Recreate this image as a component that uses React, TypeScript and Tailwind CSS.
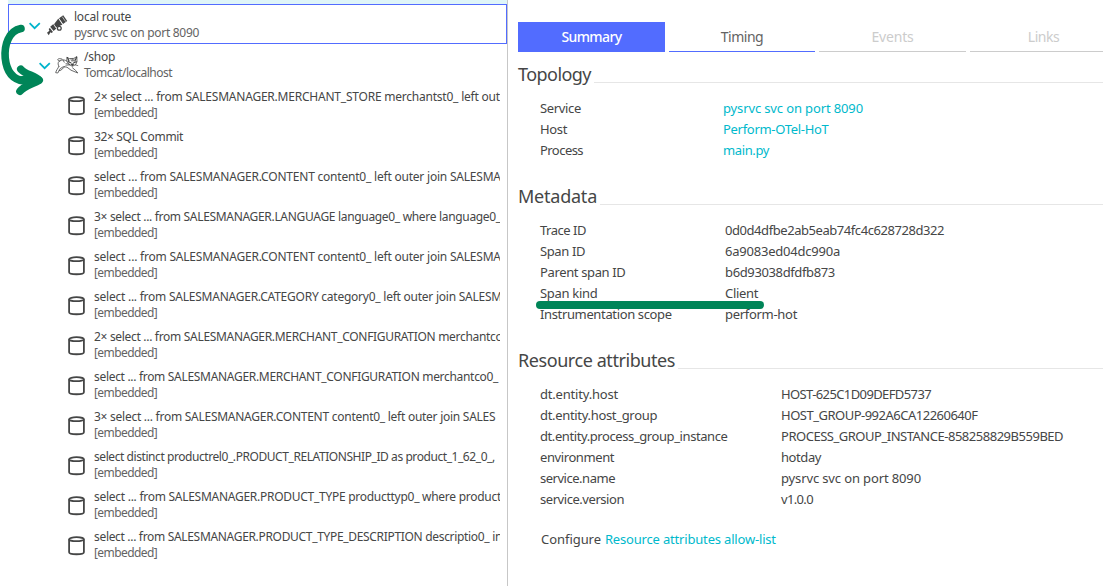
import React from "react";

type Statement = { text: string; tracking: string };
type Attribute = { name: string; nameTracking: string; value: string; valueTracking: string };

const statements: Statement[] = [
  { text: "2× select ... from SALESMANAGER.MERCHANT_STORE merchantst0_ left out", tracking: "tracking-[-0.22px]" },
  { text: "32× SQL Commit", tracking: "tracking-[-0.34px]" },
  { text: "select ... from SALESMANAGER.CONTENT content0_ left outer join SALESMA", tracking: "tracking-[-0.21px]" },
  { text: "3× select ... from SALESMANAGER.LANGUAGE language0_ where language0_", tracking: "tracking-[-0.32px]" },
  { text: "select ... from SALESMANAGER.CONTENT content0_ left outer join SALESMA", tracking: "tracking-[-0.21px]" },
  { text: "select ... from SALESMANAGER.CATEGORY category0_ left outer join SALESM", tracking: "tracking-[-0.24px]" },
  { text: "2× select ... from SALESMANAGER.MERCHANT_CONFIGURATION merchantco", tracking: "tracking-[-0.31px]" },
  { text: "select ... from SALESMANAGER.MERCHANT_CONFIGURATION merchantco0_", tracking: "tracking-[-0.31px]" },
  { text: "3× select ... from SALESMANAGER.CONTENT content0_ left outer join SALES", tracking: "tracking-[-0.26px]" },
  { text: "select distinct productrel0_.PRODUCT_RELATIONSHIP_ID as product_1_62_0_,", tracking: "tracking-[-0.43px]" },
  { text: "select ... from SALESMANAGER.PRODUCT_TYPE producttyp0_ where product", tracking: "tracking-[-0.27px]" },
  { text: "select ... from SALESMANAGER.PRODUCT_TYPE_DESCRIPTION descriptio0_ in", tracking: "tracking-[-0.32px]" },
];

const topology: Attribute[] = [
  { name: "Service", nameTracking: "tracking-[-0.34px]", value: "pysrvc svc on port 8090", valueTracking: "tracking-[-0.13px]" },
  { name: "Host", nameTracking: "tracking-[-0.35px]", value: "Perform-OTel-HoT", valueTracking: "tracking-[-0.3px]" },
  { name: "Process", nameTracking: "tracking-[-0.55px]", value: "main.py", valueTracking: "tracking-[-0.38px]" },
];

const metadata: Attribute[] = [
  { name: "Trace ID", nameTracking: "tracking-[-0.48px]", value: "0d0d4dfbe2ab5eab74fc4c628728d322", valueTracking: "tracking-[-0.44px]" },
  { name: "Span ID", nameTracking: "tracking-[-0.39px]", value: "6a9083ed04dc990a", valueTracking: "tracking-[-0.22px]" },
  { name: "Parent span ID", nameTracking: "tracking-[-0.36px]", value: "b6d93038dfdfb873", valueTracking: "tracking-[-0.37px]" },
  { name: "Span kind", nameTracking: "tracking-[-0.3px]", value: "Client", valueTracking: "tracking-[-0.33px]" },
  { name: "Instrumentation scope", nameTracking: "tracking-[-0.36px]", value: "perform-hot", valueTracking: "tracking-[-0.3px]" },
];

const resources: Attribute[] = [
  { name: "dt.entity.host", nameTracking: "tracking-[-0.19px]", value: "HOST-625C1D09DEFD5737", valueTracking: "tracking-[-0.61px]" },
  { name: "dt.entity.host_group", nameTracking: "tracking-[-0.32px]", value: "HOST_GROUP-992A6CA12260640F", valueTracking: "tracking-[-0.5px]" },
  { name: "dt.entity.process_group_instance", nameTracking: "tracking-[-0.41px]", value: "PROCESS_GROUP_INSTANCE-858258829B559BED", valueTracking: "tracking-[-0.48px]" },
  { name: "environment", nameTracking: "tracking-[-0.41px]", value: "hotday", valueTracking: "tracking-[-0.42px]" },
  { name: "service.name", nameTracking: "tracking-[-0.48px]", value: "pysrvc svc on port 8090", valueTracking: "tracking-[-0.13px]" },
  { name: "service.version", nameTracking: "tracking-[-0.45px]", value: "v1.0.0", valueTracking: "tracking-[-0.65px]" },
];

function Chevron() {
  return (
    <svg className="h-2 w-3 shrink-0" viewBox="0 0 12 8" fill="none" stroke="#00b4cc" strokeWidth="1.8">
      <path d="M0.6 1.2 5.6 6.2 10.8 1.2" />
    </svg>
  );
}

function TelescopeIcon() {
  return (
    <svg className="h-[21px] w-[21px] shrink-0" viewBox="0 0 21 21" fill="#454646">
      <path d="M12 3.2 16.2.2 20.2 6 16 9Z" />
      <path d="M11.4 3.6 15.4 9.4 14.6 10 9.2 12.6 7 9.2Z" />
      <path d="M6.4 9 9.4 13.6 6.6 16.1 3.2 11.8Z" />
      <path d="M2.9 13 6 17 4.4 18 3.4 17.2 1.8 20.2 0 17.8 2.4 15.8 1.7 14Z" />
      <circle cx="12.3" cy="13.2" r="1.9" fill="#fff" stroke="#454646" strokeWidth="1.3" />
      <path d="M15.2 1.6 18.6 6.6M11.7 3.5 15.6 9.2M6.7 9.4 9.2 13.2" stroke="#fff" strokeWidth=".6" />
    </svg>
  );
}

function TomcatIcon() {
  return (
    <svg className="h-[18px] w-6 shrink-0" viewBox="0 0 24 18" fill="none" stroke="#454646" strokeWidth=".8" strokeLinecap="round" strokeLinejoin="round">
      <path d="M12.2 1.4 14.2 2.6 18.8 2.4 21.8.6 22 5.6 20.7 8.6 17.3 10.3 13.7 8.2 12.1 5.6Z" />
      <path d="M12.4 1.6 14 5M21.6 1.2 19.8 5M13.2 5.8 15.8 6.8M18.8 6.8 21.4 5.8M16.4 8.1h2L17.4 9.3Z" strokeWidth="1.2" />
      <path d="M16 3.2 16.5 5M17.6 2.8V5M19 3 18.5 5M11 7.6 14.8 8.3M10.8 9.2 14.8 8.9M20.2 8.8 22.8 9.6" strokeWidth=".7" />
      <path d="M12 5.2C9.8 3.4 6.4 3.4 4 5.4 2.8 6.6 2.8 9 3.9 10.3M3.9 10.3C2.9 12.7 1 14.5.7 16.7L2.8 17 5.2 12.6 8.5 10.6 12 11.2 16 14.2 22.8 17 20.6 14.4 17.5 11.8M9.6 10.8 5.8 14.3 4.2 14.6M4.8 5.2C2.2 4.7 2 2.8 4.4 2.6L6.8 3M8 4 9.2 6.2" />
    </svg>
  );
}

function DatabaseIcon() {
  return (
    <svg className="h-5 w-[18px] shrink-0" viewBox="0 0 18 20" fill="none" stroke="#454646" strokeWidth="1.8">
      <ellipse cx="8.5" cy="3.2" rx="7.4" ry="2" />
      <path d="M1.1 3.2V16.2C1.1 18.9 15.9 18.9 15.9 16.2V3.2" />
    </svg>
  );
}

function Section({ title, tracking, children }: { title: string; tracking: string; children: React.ReactNode }) {
  return (
    <section>
      <div className="mb-2.5 flex h-[26px] items-start">
        <h2 className={"-mt-px text-[18px] leading-[26px] whitespace-nowrap " + tracking}>{title}</h2>
        <div className="mt-5 ml-[3px] h-px flex-1 bg-[#e6e6e6]" />
      </div>
      {children}
    </section>
  );
}

function Attributes({ items, column }: { items: Attribute[]; column: string }) {
  return (
    <dl className="pl-[22px] text-[13px] leading-[21px]">
      {items.map((item) => (
        <div key={item.name} className="flex h-[21px] whitespace-nowrap">
          <dt className={"shrink-0 " + column + " " + item.nameTracking}>{item.name}</dt>
          <dd className={item.valueTracking}>{item.value}</dd>
        </div>
      ))}
    </dl>
  );
}

export default function App() {
  return (
    <div className="relative flex h-[586px] w-[1103px] overflow-hidden bg-white font-['Noto_Sans',sans-serif] text-[#454646]">
      <aside className="w-[508px] shrink-0 overflow-hidden border-r border-[#c7c7c7] pl-2 text-[12px] leading-4">
        <div className="h-1 bg-[#dff5f8]" />
        <div className="flex h-10 border border-[#526cff]">
          <div className="mt-[17px] ml-5"><Chevron /></div>
          <div className="mt-2.5 ml-[6px]"><TelescopeIcon /></div>
          <div className="mt-1 ml-[6px] whitespace-nowrap">
            <div className="tracking-[-0.23px]">local route</div>
            <div className="tracking-[-0.3px] text-[#636363]">pysrvc svc on port 8090</div>
          </div>
        </div>
        <div className="flex h-10">
          <div className="mt-[18px] ml-[31px]"><Chevron /></div>
          <div className="mt-3 ml-1"><TomcatIcon /></div>
          <div className="mt-[5px] ml-[5px] whitespace-nowrap">
            <div className="tracking-[-0.25px]">/shop</div>
            <div className="tracking-[-0.52px] text-[#636363]">Tomcat/localhost</div>
          </div>
        </div>
        {statements.map((s, i) => (
          <div key={i} className="flex h-10 pl-[60px]">
            <div className="mt-3"><DatabaseIcon /></div>
            <div className="mt-[5px] ml-2 w-[406px] overflow-hidden whitespace-nowrap">
              <div className={s.tracking}>{s.text}</div>
              <div className="tracking-[-0.59px] text-[#636363]">[embedded]</div>
            </div>
          </div>
        ))}
      </aside>

      <main className="min-w-0 flex-1 pl-2.5">
        <nav className="mt-[22px] mb-2.5 flex h-[30px] gap-1 text-center text-[14px] leading-[30px]">
          <div className="w-[147px] shrink-0 bg-[#526cff] font-medium tracking-[-0.6px] text-white">Summary</div>
          <div className="w-[146px] shrink-0 border-b border-[#526cff] tracking-[-0.5px] text-[#636363]">Timing</div>
          <div className="w-[147px] shrink-0 border-b border-[#cccccc] tracking-[-0.2px] text-[#cccccc]">Events</div>
          <div className="w-[147px] shrink-0 border-b border-[#cccccc] tracking-[-0.5px] text-[#cccccc]">Links</div>
        </nav>
        <div className="flex flex-col gap-[23px]">
          <Section title="Topology" tracking="tracking-[-0.55px]">
            <div className="[&_dd]:text-[#00b9cc]"><Attributes items={topology} column="w-[183px]" /></div>
          </Section>
          <Section title="Metadata" tracking="tracking-[-0.23px]">
            <Attributes items={metadata} column="w-[185px]" />
          </Section>
          <Section title="Resource attributes" tracking="tracking-[-0.43px]">
            <Attributes items={resources} column="w-[241px]" />
          </Section>
        </div>
        <p className="mt-[19px] flex gap-1 pl-[23px] text-[13px] leading-[21px]">
          <span className="tracking-[-0.05px]">Configure</span>
          <a className="tracking-[-0.18px] text-[#00b9cc]">Resource attributes allow-list</a>
        </p>
      </main>

      <svg className="absolute top-[22px] left-0 h-[76px] w-12" viewBox="0 0 48 76" fill="none" stroke="#008558" strokeLinecap="round" strokeLinejoin="round">
        <path d="M21 6.5C8.5 9 4.2 23 5.2 36C6.5 49 12.5 57.5 24 59" strokeWidth="7.6" />
        <path d="M20.8 47.2C26 53 34 53 39.2 58.2C33 62 24 64 20 69.3" strokeWidth="7.6" />
        <path d="M22 58 38 58" strokeWidth="8" />
      </svg>
      <div className="absolute top-[301px] left-[536px] h-2 w-[228px] rounded-full bg-[#008558]" />
    </div>
  );
}
